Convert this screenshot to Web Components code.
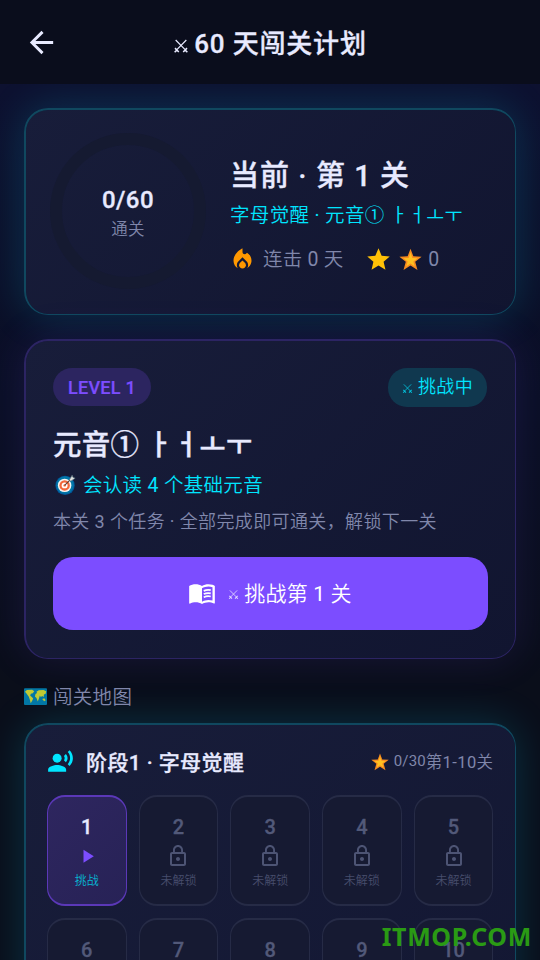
<!DOCTYPE html>
<html lang="zh-CN">
<head>
<meta charset="utf-8">
<title>60 天闯关计划</title>
<style>
html,body{margin:0;height:100%;overflow:hidden;background:#0a0e1a}
body{--thin:Roboto,"Noto Sans CJK SC DemiLight","Noto Sans CJK SC",sans-serif;--strong:Roboto,"Noto Sans CJK SC",sans-serif;font-family:var(--thin);color:#e8eaff}
</style>
</head>
<body>
<quest-page></quest-page>
<script>
const ICONS = {
  back:'<path d="M20 11H7.83l5.59-5.59L12 4l-8 8 8 8 1.41-1.41L7.83 13H20z"/>',
  swords:'<path d="M4 3 18.2 17.4M20 3 5.8 17.4" fill="none" stroke="currentColor" stroke-width="1.8"/><path d="M3 15.2 8.7 21M21 15.2 15.3 21M2.5 21.3 6 17.6M21.5 21.3 18 17.6" fill="none" stroke="currentColor" stroke-width="2.3"/>',
  fire:'<path d="M12 12.9l-2.13 2.09c-.56.56-.87 1.29-.87 2.07C9 18.68 10.35 20 12 20s3-1.32 3-2.94c0-.78-.31-1.52-.87-2.07z"/><path d="M16 6l-.44.55C14.38 8.02 12 7.19 12 5.3V2S4 6 4 13c0 2.92 1.56 5.47 3.89 6.86-.56-.79-.89-1.76-.89-2.8 0-1.32.52-2.56 1.47-3.5L12 10.1l3.53 3.47c.95.93 1.47 2.17 1.47 3.5 0 1.02-.31 1.96-.85 2.75 1.89-1.15 3.29-3.06 3.71-5.3.66-3.55-1.07-6.9-3.86-8.52z"/>',
  star:'<path d="M12 17.27 18.18 21l-1.64-7.03L22 9.24l-7.19-.61L12 2 9.19 8.63 2 9.24l5.46 4.73L5.82 21z"/>',
  emojistar:'<path fill="#f78b1f" d="M12 .8 15 8.7 23.6 9.1 16.9 14.4 19.3 23 12 18.2 4.7 23 7.1 14.4.4 9.1 9 8.7z"/><path fill="#ffc020" d="M12 4.8 13.9 10.4 19.4 10.7 15 14.1 16.5 19.2 12 16.2 7.5 19.2 9 14.1 4.6 10.7 10.1 10.4z"/>',
  target:'<circle cx="11.5" cy="13" r="11" fill="#01579b"/><circle cx="11.5" cy="12.7" r="10" fill="#0277a8"/><circle cx="11" cy="13" r="7.7" fill="#f5f5f5"/><circle cx="11" cy="13" r="6" fill="#f4683c"/><circle cx="11" cy="13" r="3.4" fill="#fff"/><circle cx="11" cy="13" r="1.4" fill="#f4683c"/><path d="M11 13 19 5" stroke="#5d4037" stroke-width="1.3"/><path d="M16.4 6.7 19.6 1.4 20.5 3.7 23 4.8 18 8.3z" fill="#e0e0e0" stroke="#546e7a" stroke-width=".8"/>',
  map:'<rect y="3.4" width="24" height="17.4" rx="1" fill="#0277a5"/><path fill="#c0ca33" d="M1 7 3 5.2 8.5 5 10.7 6.4 9.2 8.6 7.2 9 6.4 11 8.4 12.8 9.6 14.2 8.5 16.4 7 19 6.2 15.6 5 12.2 2.8 9.2zM13 7l2.4-1.6 5-.2L23.2 6.6 22.6 9 20.8 10l-.2 2.6-1.8-1.2-1.2 1.4-1-1.8-1 3.2-1.2 3-1.4-3.6-1.6-1.6.6-2.6 1.6-1z"/><path fill="#c0ca33" d="m19 14.5 2.2-.8 1.4 2.2-1.6 1z"/>',
  book:'<path fill-rule="evenodd" d="M21 5c-1.11-.35-2.33-.5-3.5-.5-1.95 0-4.05.4-5.5 1.5-1.45-1.1-3.55-1.5-5.5-1.5S2.45 4.9 1 6v14.65c0 .25.25.5.5.5 1.6-.7 3.5-1.15 5-1.15 1.95 0 4.05.4 5.5 1.5 1.35-.85 3.8-1.5 5.5-1.5 1.65 0 3.35.3 4.75 1.05.4.15.75-.1.75-.45V6c-.6-.45-1.25-.75-2-1zm0 13.5c-1.1-.35-2.3-.5-3.5-.5-1.7 0-4.15.65-5.5 1.5V8c1.35-.85 3.8-1.5 5.5-1.5 1.2 0 2.4.15 3.5.5z"/><path d="M13.5 10.2c1.8-.8 4-1.1 6-.6M13.5 12.9c1.8-.8 4-1.1 6-.6M13.5 15.6c1.8-.8 4-1.1 6-.6" fill="none" stroke="currentColor" stroke-width="1.5"/>',
  voice:'<circle cx="9" cy="9" r="4"/><path d="M9 15c-2.67 0-8 1.34-8 4v2h16v-2c0-2.66-5.33-4-8-4zm7.76-9.64l-1.68 1.69c.84 1.18.84 2.71 0 3.89l1.68 1.69c2.02-2.02 2.02-5.07 0-7.27zM20.07 2l-1.63 1.63c2.77 3.02 2.77 7.56 0 10.74L20.07 16c3.9-3.89 3.91-9.95 0-14z"/>',
  play:'<path d="M8 5v14l11-7z"/>',
  lock:'<path fill-rule="evenodd" d="M18 8h-1V6c0-2.76-2.24-5-5-5S7 3.24 7 6v2H6c-1.1 0-2 .9-2 2v10c0 1.1.9 2 2 2h12c1.1 0 2-.9 2-2V10c0-1.1-.9-2-2-2zM8.9 6c0-1.71 1.39-3.1 3.1-3.1s3.1 1.39 3.1 3.1v2H8.9zM18 20H6V10h12zM12 17c1.1 0 2-.9 2-2s-.9-2-2-2-2 .9-2 2 .9 2 2 2z"/>'
};
const STRONG = 'font-family:var(--strong);font-weight:500;-webkit-text-stroke:.3px currentColor;';
const define = (name, render) => customElements.define(name, class extends HTMLElement {
  connectedCallback(){
    if(this.shadowRoot) return;
    this.attachShadow({mode:'open'}).innerHTML = render(this);
  }
});

define('ui-icon', el => `<style>:host{display:block;flex:none;width:${el.getAttribute('size')}px;height:${el.getAttribute('size')}px}svg{display:block;width:100%;height:100%;overflow:visible}</style>
<svg viewBox="0 0 24 24" fill="currentColor">${ICONS[el.getAttribute('name')]}</svg>`);

define('app-bar', () => `<style>
:host{display:grid;grid-template-columns:60px 1fr 60px;align-items:center;height:84px;box-sizing:border-box;background:#0a0d1c;position:relative;z-index:1}
ui-icon.back{margin:0 0 0 24px}
h1{${STRONG}margin:3px 0 0;display:flex;align-items:center;justify-content:center;font-size:26px;line-height:40px;letter-spacing:.8px;white-space:nowrap}
ui-icon.sw{margin:5px 5px 0 0}
</style><ui-icon class="back" name="back" size="35"></ui-icon><h1><ui-icon class="sw" name="swords" size="16"></ui-icon><slot></slot></h1>`);

define('glow-card', () => `<style>
:host{display:block;box-sizing:border-box;border:solid var(--edge);border-width:2px 1px 1px 2px;border-radius:24px;background:linear-gradient(135deg,#181d3a,#111530) padding-box;box-shadow:0 0 42px var(--glow);padding:var(--pad)}
:host([tone=cyan]){--edge:#10485f;--glow:rgba(0,215,255,.18)}
:host([tone=violet]){--edge:#2c2463;--glow:rgba(124,77,255,.13)}
</style><slot></slot>`);

define('progress-ring', () => `<style>
:host{display:flex;flex-direction:column;align-items:center;box-sizing:border-box;width:156px;height:156px;border:12px solid #151a31;border-radius:50%;padding-top:39px}
b{${STRONG}font-size:24px;line-height:32px;letter-spacing:.4px}
.cap{font-size:16.5px;line-height:24px;margin-top:2px;color:#8087ab;letter-spacing:.3px}
</style><b><slot name="value"></slot></b><span class="cap"><slot></slot></span>`);

define('status-pill', () => `<style>
:host{display:flex;align-items:center;justify-content:center;box-sizing:border-box;height:38px;border-radius:19px;font-size:18px;white-space:nowrap}
:host([tone=violet]){width:98px;background:#2c2560;color:#7c4dff;font-weight:500;-webkit-text-stroke:.2px currentColor;padding-top:1px;letter-spacing:.3px}
:host([tone=cyan]){width:99px;height:39px;background:#10384f;color:#00e5ff;letter-spacing:.3px;padding-bottom:5px;margin-right:1px}
</style><slot></slot>`);

define('level-cell', el => {
  const on = el.hasAttribute('active');
  return `<style>
:host{display:flex;flex-direction:column;align-items:center;box-sizing:border-box;height:111px;border:solid ${on?'#5b38b8':'#262b46'};border-width:2px 1px 2px 1px;border-radius:18px;background:${on?'linear-gradient(135deg,#2e265f,#272256)':'#161a32'};color:${on?'#e8eaff':'#525979'};padding-top:16px}
b{${STRONG}font-size:20px;line-height:28px}
ui-icon{margin-top:${on?4:3}px;color:${on?'#7c4dff':'#4d5474'}}
span{font-size:12px;line-height:18px;margin-top:${on?4:3.5}px;color:${on?'#06b9d6':'#474d6c'}}
</style><b><slot></slot></b><ui-icon name="${on?'play':'lock'}" size="${on?22.5:24}"></ui-icon><span>${on?'挑战':'未解锁'}</span>`;
});

define('summary-card', () => `<style>
:host{display:block}
glow-card{--pad:23px 24px 0;height:207px}
.row{display:flex;gap:24px}
.col{padding-top:23px}
h2{${STRONG}margin:0;font-size:29px;line-height:40px;letter-spacing:1.05px;white-space:nowrap}
.sub{font-size:19.5px;line-height:30px;margin-top:5px;color:#00e5ff;white-space:nowrap;letter-spacing:.33px}
.stats{display:flex;align-items:center;height:30px;margin-top:13px;font-size:19.5px;color:#8087ab;white-space:nowrap;letter-spacing:.2px}
.streak{margin-top:-3px}
.fire{color:#ff9800;margin:0 7px 0 -1px}
.star{color:#ffc107;margin-left:22px}
.es{margin:1px 6px 0 7px}
</style><glow-card tone="cyan"><div class="row">
<progress-ring><span slot="value">0/60</span>通关</progress-ring>
<div class="col"><h2>当前 · 第 1 关</h2><div class="sub">字母觉醒 · 元音① ㅏㅓㅗㅜ</div>
<div class="stats"><ui-icon class="fire" name="fire" size="27"></ui-icon><span class="streak">连击 0 天</span><ui-icon class="star" name="star" size="27"></ui-icon><ui-icon class="es" name="emojistar" size="23"></ui-icon><span>0</span></div></div>
</div></glow-card>`);

define('challenge-card', () => `<style>
:host{display:block;margin-top:24px}
glow-card{--pad:27px 27px 0;height:320px}
.top{display:flex;justify-content:space-between}
h2{${STRONG}margin:19px 0 0;font-size:28.5px;line-height:40px;letter-spacing:.25px}
.goal{display:flex;align-items:center;margin-top:2px;height:30px;font-size:19.5px;letter-spacing:.3px;color:#00e5ff}
.goal ui-icon{margin:2px 7px 0 2px}
p{margin:10px 0 0;font-size:18px;line-height:28px;color:#8087ab;white-space:nowrap;letter-spacing:.37px}
button{display:flex;align-items:center;justify-content:center;width:435px;height:73px;margin:21px 0 0;border:0;border-radius:20px;background:#7c4dff;color:#fff;font:400 21px var(--thin);letter-spacing:.15px;padding:0 1px 3px 0}
button ui-icon{position:relative;top:1px}
.s{margin:7px 5px 0 0;opacity:.8}
button .s{margin:3px 5px 0 12px}
</style><glow-card tone="violet">
<div class="top"><status-pill tone="violet">LEVEL 1</status-pill><status-pill tone="cyan"><ui-icon class="s" name="swords" size="11"></ui-icon>挑战中</status-pill></div>
<h2>元音① ㅏㅓㅗㅜ</h2>
<div class="goal"><ui-icon name="target" size="21"></ui-icon>会认读 4 个基础元音</div>
<p>本关 3 个任务 · 全部完成即可通关，解锁下一关</p>
<button><ui-icon name="book" size="28"></ui-icon><ui-icon class="s" name="swords" size="11"></ui-icon>挑战第 1 关</button>
</glow-card>`);

define('stage-card', () => `<style>
:host{display:block;margin-top:13px}
glow-card{--pad:21px 21px 24px;height:620px}
header{display:flex;align-items:center;height:34px}
header>ui-icon{color:#00e5ff;margin:-3px 0 0 0}
h3{${STRONG}margin:-1px 0 0 12px;font-size:21px;line-height:34px;flex:1;letter-spacing:.4px}
.meta{display:flex;align-items:center;color:#8087ab;font-size:16.5px;margin:-5px .5px 0 0;letter-spacing:.4px}
.meta small{font-size:15px;margin-top:1px;letter-spacing:.1px}
.meta ui-icon{margin:2px 5px 0 0}
.grid{display:grid;grid-template-columns:repeat(5,79.6px);column-gap:12.1px;row-gap:12px;margin-top:15px}
</style><glow-card tone="cyan"><header><ui-icon name="voice" size="27"></ui-icon><h3>阶段1 · 字母觉醒</h3><div class="meta"><ui-icon name="emojistar" size="18"></ui-icon><small>0/30</small><span>第1-10关</span></div></header>
<div class="grid">${Array.from({length:10},(_,i)=>`<level-cell ${i?'':'active'}>${i+1}</level-cell>`).join('')}</div></glow-card>`);

define('quest-page', () => `<style>
:host{display:block;width:540px;height:960px;overflow:hidden;position:relative;background:linear-gradient(180deg,#0e1132 0,#0d1130 90px,#0a0f25 400px,#0a0e1a 680px)}
main{padding:24px 24px 0}
.map{display:flex;align-items:center;gap:6px;height:30px;margin-top:21px;font-size:19.5px;letter-spacing:.3px;color:#8087ab}
.map ui-icon{margin-top:3px}
.mark{position:absolute;right:9px;bottom:6px;font:700 25px/36px "Noto Sans",sans-serif;letter-spacing:.65px;margin-right:-1px;color:#2a9a14}
</style><app-bar>60 天闯关计划</app-bar>
<main><summary-card></summary-card><challenge-card></challenge-card>
<div class="map"><ui-icon name="map" size="23"></ui-icon>闯关地图</div>
<stage-card></stage-card></main><div class="mark">ITMOP.COM</div>`);
</script>
</body>
</html>
